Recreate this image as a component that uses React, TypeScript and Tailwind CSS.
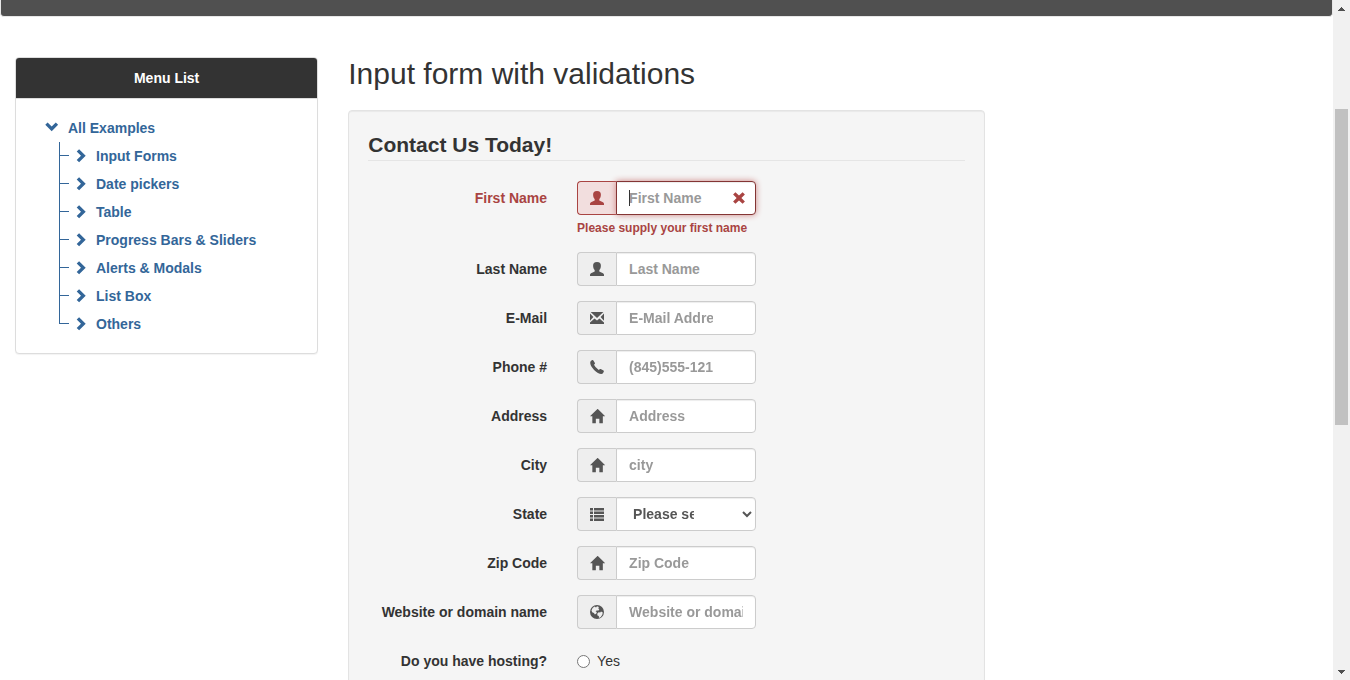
import React from "react";

type IconProps = { className?: string };

function Glyph({ children, className = "" }: IconProps & { children: React.ReactNode }) {
  return (
    <svg
      viewBox="0 0 14 14"
      fill="currentColor"
      aria-hidden="true"
      className={`h-[14px] w-[14px] shrink-0 overflow-visible ${className}`}
    >
      {children}
    </svg>
  );
}

const UserIcon = () => (
  <Glyph>
    <path d="M7 0C9.8 0 11 1.3 10.9 3.8C10.8 6 10.2 7.2 9.3 8.2V9.6L13 11.2Q14 11.8 14 12.8V14H0V12.8Q0 11.8 1 11.2L4.7 9.6V8.2C3.8 7.2 3.2 6 3.1 3.8C3 1.3 4.2 0 7 0Z" />
  </Glyph>
);

const EnvelopeIcon = () => (
  <Glyph>
    <path d="M.6 1H13.4L7 7Z" />
    <path d="M0 2.6L3.4 6L0 9.8Z" />
    <path d="M14 2.6L10.6 6L14 9.8Z" />
    <path d="M0 13V11.6L4.5 7.4L7 9.6L9.5 7.4L14 11.6V13Z" />
  </Glyph>
);

const PhoneIcon = () => (
  <Glyph>
    <path d="M2.2.1Q2.9-.3 3.4.4L4.9 3Q5.2 3.7 4.7 4.1L4 4.8Q5.2 7.7 8.8 9.9L9.6 9.2Q10.1 8.8 10.7 9.1L13.5 10.6Q14.1 11 13.8 11.7Q12.9 13.9 11.4 13.9Q8.3 14 4.1 9.9Q0 5.7 .2 2.6Q.3.9 2.2.1Z" />
  </Glyph>
);

const HomeIcon = () => (
  <Glyph>
    <path
      transform="scale(0.0116667 -0.0116667) translate(0 -1225)"
      d="M18 618l620 608q8 7 18.5 7t17.5 -7l608 -608q8 -8 5.5 -13t-12.5 -5h-175v-575q0 -10 -7.5 -17.5t-17.5 -7.5h-250q-10 0 -17.5 7.5t-7.5 17.5v375h-300v-375q0 -10 -7.5 -17.5t-17.5 -7.5h-250q-10 0 -17.5 7.5t-7.5 17.5v575h-175q-10 0 -12.5 5t5.5 13z"
    />
  </Glyph>
);

const ListIcon = () => (
  <Glyph>
    <path d="M0 1H3V3.6H0ZM0 4.5H3V7.1H0ZM0 8H3V10.6H0ZM0 11.4H3V14H0ZM4 1H14V3.6H4ZM4 4.5H14V7.1H4ZM4 8H14V10.6H4ZM4 11.4H14V14H4Z" />
  </Glyph>
);

const GlobeIcon = () => (
  <Glyph>
    <path
      fillRule="evenodd"
      d="M7 0A7 7 0 1 1 7 14A7 7 0 1 1 7 0ZM4.6 1.5L2.6 3L1.5 5.4L2.2 7.3L3.9 7.9L4.9 9.4L6.4 8.4L6.8 7L5.6 6.2L6.8 5.4L8.6 5.4L9.3 4L8.2 3.4L8.9 1.9L7 1.2L6 2.5ZM8.6 7.2L7.2 8.8L7.5 10.4L8.8 11L9 12.9L10.8 11.9L12.3 9.8L12.8 7.6L11 6.4L10.2 7.4Z"
    />
  </Glyph>
);

const RemoveIcon = () => (
  <Glyph>
    <path d="M3.4 1.2L7 4.6L10.6 1.2L12.9 3.5L9.4 7L12.9 10.5L10.6 12.8L7 9.4L3.4 12.8L1.1 10.5L4.6 7L1.1 3.5Z" />
  </Glyph>
);

const ChevronDown = () => (
  <Glyph>
    <path d="M.3 3.8L2.6 1.5L6.7 5.5L10.8 1.5L13.1 3.8L6.7 10.2Z" />
  </Glyph>
);

const ChevronRight = () => (
  <Glyph>
    <path d="M6.1.2L12.7 6.7L6.1 13.2L3.7 10.9L8 6.7L3.7 2.5Z" />
  </Glyph>
);

const menuItems = [
  "Input Forms",
  "Date pickers",
  "Table",
  "Progress Bars & Sliders",
  "Alerts & Modals",
  "List Box",
  "Others",
];

function MenuPanel() {
  return (
    <nav
      aria-label="Menu List"
      className="overflow-hidden rounded border border-[#ddd] bg-white shadow-[0_1px_1px_rgba(0,0,0,0.05)]"
    >
      <div className="border-b border-[#ddd] bg-[#333] py-[10px] text-center font-bold text-white">
        Menu List
      </div>
      <div className="py-[15px] pl-[29px] font-bold text-[#336699]">
        <a href="#all" className="flex h-7 items-center gap-[9px]">
          <ChevronDown />
          All Examples
        </a>
        <ul className="pl-[14px]">
          {menuItems.map((item, i) => (
            <li key={item} className="flex h-7 items-center">
              <span className="mr-1 h-7 w-[10px]" aria-hidden="true">
                <span className="block h-[14px] border-b border-l border-[#336699]" />
                {i < menuItems.length - 1 && (
                  <span className="block h-[14px] border-l border-[#336699]" />
                )}
              </span>
              <a href="#item" className="flex items-center gap-[9px]">
                <ChevronRight />
                {item}
              </a>
            </li>
          ))}
        </ul>
      </div>
    </nav>
  );
}

type Field = {
  id: string;
  label: string;
  placeholder: string;
  icon: React.ReactNode;
  kind?: "select";
  pad: string;
  error?: string;
};

const fields: Field[] = [
  { id: "first", label: "First Name", placeholder: "First Name", icon: <UserIcon />, pad: "pr-[42px]", error: "Please supply your first name" },
  { id: "last", label: "Last Name", placeholder: "Last Name", icon: <UserIcon />, pad: "pr-[42px]" },
  { id: "email", label: "E-Mail", placeholder: "E-Mail Address", icon: <EnvelopeIcon />, pad: "pr-[42px]" },
  { id: "phone", label: "Phone #", placeholder: "(845)555-1212", icon: <PhoneIcon />, pad: "pr-[42px]" },
  { id: "address", label: "Address", placeholder: "Address", icon: <HomeIcon />, pad: "pr-[42px]" },
  { id: "city", label: "City", placeholder: "city", icon: <HomeIcon />, pad: "pr-[42px]" },
  { id: "state", label: "State", placeholder: "Please select your state", icon: <ListIcon />, pad: "pr-[45px]", kind: "select" },
  { id: "zip", label: "Zip Code", placeholder: "Zip Code", icon: <HomeIcon />, pad: "pr-[42px]" },
  { id: "website", label: "Website or domain name", placeholder: "Website or domain name", icon: <GlobeIcon />, pad: "pr-3" },
];

const controlBase =
  "h-[34px] w-full min-w-0 flex-1 rounded-r border bg-white pl-3 font-bold text-[#555] outline-none placeholder:text-[#999] placeholder:opacity-100";

function FieldRow({ field }: { field: Field }) {
  const [value, setValue] = React.useState("");
  const bad = Boolean(field.error);
  const tone = bad
    ? "border-[#843534] shadow-[inset_0_1px_1px_rgba(0,0,0,0.075),0_0_6px_#ce8483]"
    : "border-[#ccc] shadow-[inset_0_1px_1px_rgba(0,0,0,0.075)]";
  return (
    <div className={`mx-[-15px] mb-[15px] grid grid-cols-3 ${bad ? "text-[#a94442]" : ""}`}>
      <label htmlFor={field.id} className="px-[15px] pt-[7px] text-right font-bold">
        {field.label}
      </label>
      <div className="px-[15px]">
        <div className="relative flex">
          <span
            className={`flex w-[39px] shrink-0 items-center rounded-l border border-r-0 pl-3 ${
              bad ? "border-[#a94442] bg-[#f2dede]" : "border-[#ccc] bg-[#eee] text-[#555]"
            }`}
          >
            {field.icon}
          </span>
          {field.kind === "select" ? (
            <select id={field.id} className={`${controlBase} ${tone} ${field.pad}`}>
              <option>{field.placeholder}</option>
            </select>
          ) : (
            <input
              id={field.id}
              type="text"
              value={value}
              onChange={(e) => setValue(e.target.value)}
              placeholder={field.placeholder}
              autoFocus={bad}
              aria-invalid={bad}
              className={`${controlBase} ${tone} ${field.pad} ${bad && !value ? "caret-transparent" : ""}`}
            />
          )}
          {bad && !value && (
            <span
              className="pointer-events-none absolute left-[52px] top-[9px] h-4 w-px bg-[#333]"
              aria-hidden="true"
            />
          )}
          {bad && (
            <span className="pointer-events-none absolute right-0 top-0 flex h-[34px] w-[34px] items-center justify-center">
              <RemoveIcon />
            </span>
          )}
        </div>
        {bad && (
          <small className="mt-[5px] block whitespace-nowrap text-[12px] font-bold leading-[17px]">
            {field.error}
          </small>
        )}
      </div>
    </div>
  );
}

function ScrollRail() {
  return (
    <div className="flex w-[17px] shrink-0 flex-col bg-[#f1f1f1] text-[#505050]" aria-hidden="true">
      <div className="flex h-[17px] items-center justify-center">
        <svg viewBox="0 0 7 4" className="h-1 w-[7px]" fill="currentColor" shapeRendering="crispEdges">
          <path d="M3 0h1v1h1v1h1v1h1v1H0V3h1V2h1V1h1z" />
        </svg>
      </div>
      <div className="flex-1 px-[2px] pt-[92px]">
        <div className="h-[316px] bg-[#c1c1c1]" />
      </div>
      <div className="flex h-[17px] items-center justify-center">
        <svg viewBox="0 0 7 4" className="h-1 w-[7px]" fill="currentColor" shapeRendering="crispEdges">
          <path d="M0 0h7v1H6v1H5v1H4v1H3V3H2V2H1V1H0z" />
        </svg>
      </div>
    </div>
  );
}

export default function App() {
  return (
    <div className="flex h-screen overflow-hidden bg-white font-['Liberation_Sans',Arial,sans-serif] text-[14px] leading-5 text-[#333]">
      <div className="min-w-0 flex-1 overflow-hidden">
        <header className="h-[17px] rounded-b border border-t-0 border-[#e7e7e7] bg-[#505050]" />
        <div className="mt-10 grid grid-cols-4 items-start">
          <aside className="px-[15px]">
            <MenuPanel />
          </aside>
          <main className="col-span-2 px-[15px]">
            <h2 className="mb-5 text-[30px] leading-[33px]">Input form with validations</h2>
            <form className="rounded border border-[#e3e3e3] bg-[#f5f5f5] px-[19px] pb-12 pt-[19px] shadow-[inset_0_1px_1px_rgba(0,0,0,0.05)]">
              <fieldset className="min-w-0">
                <legend className="mb-5 block w-full border-b border-[#e5e5e5] text-[21px] font-bold leading-[30px]">
                  Contact Us Today!
                </legend>
                {fields.map((f) => (
                  <FieldRow key={f.id} field={f} />
                ))}
                <div className="mx-[-15px] grid grid-cols-3">
                  <span id="hosting" className="px-[15px] pt-[7px] text-right font-bold">
                    Do you have hosting?
                  </span>
                  <div className="px-[15px] pt-[7px]" role="radiogroup" aria-labelledby="hosting">
                    <label className="flex items-center gap-[7px]">
                      <input type="radio" name="hosting" value="yes" className="m-0 h-[13px] w-[13px]" />
                      Yes
                    </label>
                  </div>
                </div>
              </fieldset>
            </form>
          </main>
        </div>
      </div>
      <ScrollRail />
    </div>
  );
}
